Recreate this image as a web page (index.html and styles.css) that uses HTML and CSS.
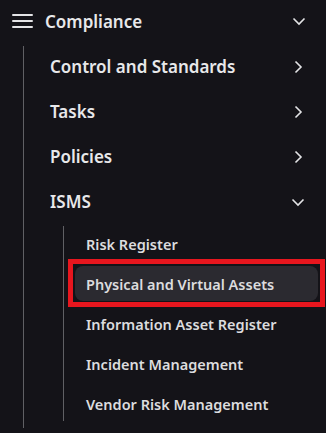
FILE: index.html
```html
<!DOCTYPE html>
<html lang="en">
<head>
    <meta charset="UTF-8">
    <meta name="viewport" content="width=device-width, initial-scale=1.0">
    <title>Compliance</title>
    <link rel="stylesheet" href="styles.css">
</head>
<body>

<nav class="sidebar">
    <!-- 상단 메뉴 제목 -->
    <div class="menu-header">
        <svg class="hamburger" width="21" height="14" viewBox="0 0 21 14">
            <path d="M1 1h19M1 7h19M1 13h19" stroke="currentColor" stroke-width="2" stroke-linecap="round"/>
        </svg>
        <span class="menu-title">Compliance</span>
        <svg class="chevron" width="16" height="16" viewBox="0 0 16 16">
            <path d="M2.5 5.5l5.5 5.5 5.5-5.5" fill="none" stroke="currentColor" stroke-width="1.6"/>
        </svg>
    </div>

    <ul class="menu-list">
        <li class="menu-item">
            <span>Control and Standards</span>
            <svg class="chevron" width="16" height="16" viewBox="0 0 16 16">
                <path d="M5.5 2.5l5.5 5.5-5.5 5.5" fill="none" stroke="currentColor" stroke-width="1.6"/>
            </svg>
        </li>
        <li class="menu-item">
            <span>Tasks</span>
            <svg class="chevron" width="16" height="16" viewBox="0 0 16 16">
                <path d="M5.5 2.5l5.5 5.5-5.5 5.5" fill="none" stroke="currentColor" stroke-width="1.6"/>
            </svg>
        </li>
        <li class="menu-item">
            <span>Policies</span>
            <svg class="chevron" width="16" height="16" viewBox="0 0 16 16">
                <path d="M5.5 2.5l5.5 5.5-5.5 5.5" fill="none" stroke="currentColor" stroke-width="1.6"/>
            </svg>
        </li>
        <li class="menu-item">
            <span>ISMS</span>
            <svg class="chevron" width="16" height="16" viewBox="0 0 16 16">
                <path d="M2.5 5.5l5.5 5.5 5.5-5.5" fill="none" stroke="currentColor" stroke-width="1.6"/>
            </svg>
        </li>
        <li class="sub-wrap">
            <ul class="sub-list">
                <li class="sub-item">Risk Register</li>
                <li class="highlight">
                    <div class="sub-item active">Physical and Virtual Assets</div>
                </li>
                <li class="sub-item">Information Asset Register</li>
                <li class="sub-item">Incident Management</li>
                <li class="sub-item">Vendor Risk Management</li>
            </ul>
        </li>
    </ul>
</nav>

</body>
</html>
```

FILE: styles.css
```css
body {
    margin: 0;
    background-color: #141318;
    font-family: "Noto Sans", "Open Sans", sans-serif;
    color: #e8e8ea;
}
ul {
    list-style: none;
    margin: 0;
    padding: 0;
}
.sidebar {
    width: 326px;
}
/* 상단 제목 */
.menu-header {
    display: flex;
    align-items: center;
    height: 42px;
    padding-left: 12px;
}
.hamburger {
    color: #e4e4e6;
    margin-right: 12px;
}
.menu-title {
    font-size: 17px;
    font-weight: 600;
    flex: 1;
}
.chevron {
    flex: none;
    color: #e4e4e6;
    margin-right: 19px;
}
/* 메뉴 목록 */
.menu-list {
    margin-top: 4px;
    margin-left: 23px;
    border-left: 1px solid #606064;
    padding-bottom: 7px;
    display: flex;
    flex-direction: column;
    gap: 4px;
}
.menu-item {
    display: flex;
    align-items: center;
    justify-content: space-between;
    height: 41px;
    padding-left: 26px;
    font-size: 17px;
    font-weight: 600;
}
.menu-item .chevron {
    margin-right: 20px;
}
/* 하위 메뉴 */
.sub-list {
    margin-left: 39px;
    border-left: 1px solid #606064;
    padding-left: 11px;
    display: flex;
    flex-direction: column;
    gap: 5px;
}
.sub-item {
    display: flex;
    align-items: center;
    height: 35px;
    width: 243px;
    box-sizing: border-box;
    padding-left: 11px;
    border-radius: 8px;
    font-size: 14.5px;
    font-weight: 600;
    color: #dcdcde;
}
/* 빨간 강조 테두리 */
.highlight {
    margin: -7px -7px -6px -7px;
    width: 243px;
    padding: 2px 2px 1px 2px;
    border: 5px solid #e8161e;
}
.sub-item.active {
    background-color: #2b2a30;
}
```
